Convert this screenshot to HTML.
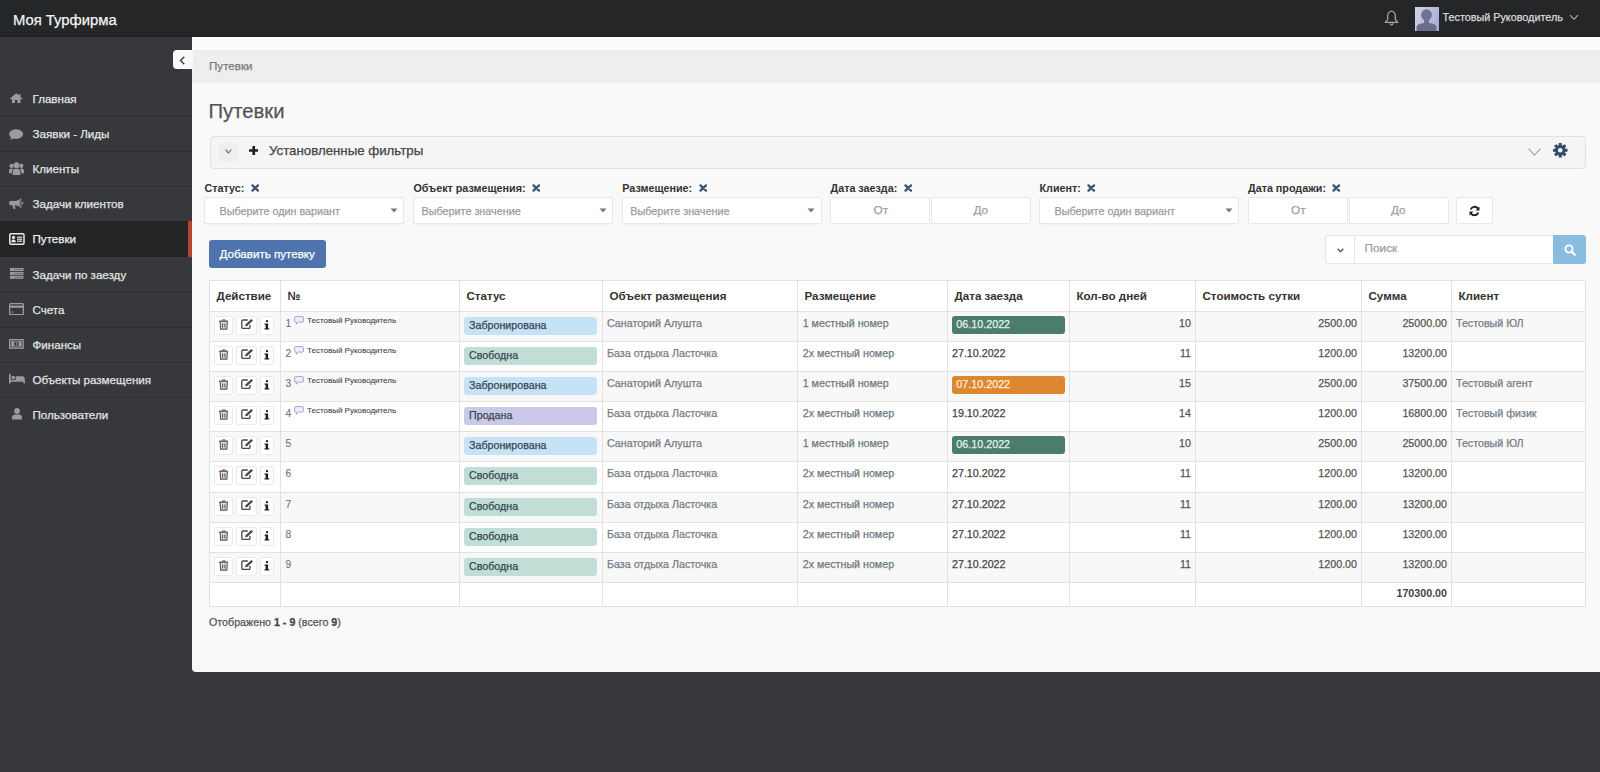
<!DOCTYPE html>
<html><head><meta charset="utf-8"><title>Путевки</title>
<style>
*{box-sizing:border-box;margin:0;padding:0}
html,body{width:1600px;height:772px;overflow:hidden}
body{background:#36383b;font-family:"Liberation Sans",sans-serif;position:relative;color:#333}
.a{position:absolute}
.t{position:absolute;white-space:nowrap;line-height:1;-webkit-text-stroke:0.25px currentColor}
.t[style*="bold"]{-webkit-text-stroke-width:0}
</style></head><body>

<div class="a" style="left:0;top:0;width:1600px;height:37px;background:#252628"></div>
<div class="a" style="left:0;top:35px;width:1600px;height:2px;background:#202123"></div>
<div class="t" style="left:12.9px;top:13.4px;font-size:14.85px;color:#f2f2f2">Моя Турфирма</div>
<svg class="a" style="left:1384px;top:10px" width="15" height="16" viewBox="0 0 15 16"><path d="M7.5 1C5.2 1.6 3.7 3.6 3.7 6.2V9.4L1.2 12.4H13.8L11.3 9.4V6.2C11.3 3.6 9.8 1.6 7.5 1Z" fill="none" stroke="#a9aaad" stroke-width="1.2" stroke-linejoin="round"/><path d="M6 13.3C6.2 14.3 6.8 14.8 7.5 14.8S8.8 14.3 9 13.3" fill="none" stroke="#a9aaad" stroke-width="1.2"/></svg>
<div class="a" style="left:1415px;top:7px;width:24px;height:24px;background:linear-gradient(120deg,#d3d5ec 0%,#b9bce0 55%,#a4a8d6 100%);overflow:hidden"><svg width="24" height="24" viewBox="0 0 24 24"><ellipse cx="11.5" cy="8" rx="5.4" ry="5.8" fill="#6f7390"/><path d="M9 12.5H14V16.5H9Z" fill="#6c7089"/><path d="M1.5 24V20.5C1.5 18.3 3.5 17 6 16.6L9.5 16H13.5L17 16.6C19.5 17 21.5 18.3 21.5 20.5V24Z" fill="#6a6e88"/></svg></div>
<div class="t" style="left:1442.5px;top:12px;font-size:10.8px;color:#d9d9d9">Тестовый Руководитель</div>
<svg class="a" style="left:1569.3px;top:14px" width="10" height="7" viewBox="0 0 10 7"><path d="M1 1.2L5 5.2 9 1.2" fill="none" stroke="#a9aaad" stroke-width="1.2"/></svg>
<div class="a" style="left:0;top:116px;width:192px;height:1px;background:#2d2f32"></div>
<div class="a" style="left:0;top:117px;width:192px;height:1px;background:#3a3c40"></div>
<svg class="a" style="left:10.4px;top:93.4px" width="12.4" height="10" viewBox="0 0 12.4 10"><path d="M6.2 0.3L0 5.6 0.9 6.6 1.9 5.8V10H5V7H7.4V10H10.5V5.8L11.5 6.6 12.4 5.6 10.4 3.9V1H8.8V2.5Z" fill="#9a9b9f"/></svg>
<div class="t" style="left:32.5px;top:93.3px;font-size:11.6px;color:#e3e3e3">Главная</div>
<div class="a" style="left:0;top:151px;width:192px;height:1px;background:#2d2f32"></div>
<div class="a" style="left:0;top:152px;width:192px;height:1px;background:#3a3c40"></div>
<svg class="a" style="left:9.3px;top:129.1px" width="14.3" height="11" viewBox="0 0 14.3 11"><path d="M7.15 0.3C3.3 0.3 0.2 2.5 0.2 5.1 0.2 6.5 1 7.7 2.3 8.6 2.1 9.5 1.6 10.2 0.9 10.8 2.5 10.7 3.8 10 4.7 9.6 5.5 9.8 6.3 9.9 7.15 9.9 11 9.9 14.1 7.7 14.1 5.1 14.1 2.5 11 0.3 7.15 0.3Z" fill="#9a9b9f"/></svg>
<div class="t" style="left:32.5px;top:128.3px;font-size:11.6px;color:#e3e3e3">Заявки - Лиды</div>
<div class="a" style="left:0;top:186px;width:192px;height:1px;background:#2d2f32"></div>
<div class="a" style="left:0;top:187px;width:192px;height:1px;background:#3a3c40"></div>
<svg class="a" style="left:9.3px;top:161.6px" width="15" height="13.5" viewBox="0 0 15 13.5"><circle cx="7.5" cy="3.2" r="2.9" fill="#9a9b9f"/><circle cx="2.6" cy="3.9" r="2.1" fill="#9a9b9f"/><circle cx="12.4" cy="3.9" r="2.1" fill="#9a9b9f"/><path d="M3.6 13.5V10.2C3.6 8 5.2 6.6 7.5 6.6S11.4 8 11.4 10.2V13.5Z" fill="#9a9b9f"/><path d="M0 11.3V8.7C0 7.3 1 6.5 2.6 6.5 3.3 6.5 3.8 6.7 4.2 7 3.2 7.8 2.8 8.9 2.8 10.2V11.3Z" fill="#9a9b9f"/><path d="M15 11.3V8.7C15 7.3 14 6.5 12.4 6.5 11.7 6.5 11.2 6.7 10.8 7 11.8 7.8 12.2 8.9 12.2 10.2V11.3Z" fill="#9a9b9f"/></svg>
<div class="t" style="left:32.5px;top:163.3px;font-size:11.6px;color:#e3e3e3">Клиенты</div>
<svg class="a" style="left:9.3px;top:197.8px" width="14.3" height="11" viewBox="0 0 14.3 11"><path d="M12.3 0.2V10.2C10.3 8.4 8 7.5 5.6 7.3L6.6 10.8 4.4 11 3.4 7.3H1.6C0.8 7.3 0.2 6.7 0.2 5.9V4.3C0.2 3.5 0.8 2.9 1.6 2.9H5.2C7.8 2.9 10.2 2 12.3 0.2Z" fill="#9a9b9f"/><path d="M11.2 2.2V8.2" stroke="#36383b" stroke-width="0.8"/><rect x="12.8" y="3.8" width="1.4" height="2.8" rx="0.6" fill="#9a9b9f"/></svg>
<div class="t" style="left:32.5px;top:198.3px;font-size:11.6px;color:#e3e3e3">Задачи клиентов</div>
<div class="a" style="left:0;top:221px;width:192px;height:36px;background:#232426"></div>
<div class="a" style="left:188px;top:221px;width:4px;height:36px;background:#b5432f"></div>
<svg class="a" style="left:8.8px;top:233px" width="15.8" height="12" viewBox="0 0 15.8 12"><rect x="0.8" y="0.8" width="14.2" height="10.4" rx="1.2" fill="none" stroke="#e8e8e8" stroke-width="1.5"/><circle cx="4.5" cy="4.4" r="1.6" fill="#e8e8e8"/><path d="M2.2 9.2C2.2 7.4 3.1 6.5 4.5 6.5S6.8 7.4 6.8 9.2Z" fill="#e8e8e8"/><rect x="8" y="3.6" width="5.2" height="1.2" fill="#e8e8e8"/><rect x="8" y="5.6" width="5.2" height="1.2" fill="#e8e8e8"/><rect x="8" y="7.6" width="5.2" height="1.2" fill="#e8e8e8"/></svg>
<div class="t" style="left:32.5px;top:233.3px;font-size:11.6px;color:#eeeeee">Путевки</div>
<div class="a" style="left:0;top:292px;width:192px;height:1px;background:#2d2f32"></div>
<div class="a" style="left:0;top:293px;width:192px;height:1px;background:#3a3c40"></div>
<svg class="a" style="left:10.1px;top:268px" width="13.5" height="10.8" viewBox="0 0 13.5 10.8"><rect x="0" y="0" width="13.5" height="3" fill="#9a9b9f"/><rect x="0" y="3.9" width="13.5" height="3" fill="#9a9b9f"/><rect x="0" y="7.8" width="13.5" height="3" fill="#9a9b9f"/><rect x="4" y="1.1" width="8.5" height="0.8" fill="#36383b" opacity=".55"/><rect x="4" y="5" width="8.5" height="0.8" fill="#36383b" opacity=".55"/><rect x="4" y="8.9" width="8.5" height="0.8" fill="#36383b" opacity=".55"/></svg>
<div class="t" style="left:32.5px;top:269.3px;font-size:11.6px;color:#e3e3e3">Задачи по заезду</div>
<div class="a" style="left:0;top:327px;width:192px;height:1px;background:#2d2f32"></div>
<div class="a" style="left:0;top:328px;width:192px;height:1px;background:#3a3c40"></div>
<svg class="a" style="left:9px;top:302.7px" width="15" height="12.3" viewBox="0 0 15 12.3"><rect x="0.65" y="0.65" width="13.7" height="11" rx="1" fill="none" stroke="#9a9b9f" stroke-width="1.3"/><rect x="0.65" y="2.6" width="13.7" height="2.2" fill="#9a9b9f"/><rect x="2.3" y="8.6" width="2.2" height="0.9" fill="#9a9b9f"/></svg>
<div class="t" style="left:32.5px;top:304.3px;font-size:11.6px;color:#e3e3e3">Счета</div>
<div class="a" style="left:0;top:362px;width:192px;height:1px;background:#2d2f32"></div>
<div class="a" style="left:0;top:363px;width:192px;height:1px;background:#3a3c40"></div>
<svg class="a" style="left:9.3px;top:339px" width="14.8" height="9.8" viewBox="0 0 14.8 9.8"><rect x="0.7" y="0.7" width="13.4" height="8.4" fill="none" stroke="#9a9b9f" stroke-width="1.4"/><rect x="2.2" y="2.2" width="10.4" height="5.4" fill="#9a9b9f"/><ellipse cx="7.4" cy="4.9" rx="2.3" ry="2.4" fill="#36383b"/><rect x="6.9" y="3.4" width="1" height="3" fill="#9a9b9f"/></svg>
<div class="t" style="left:32.5px;top:339.3px;font-size:11.6px;color:#e3e3e3">Финансы</div>
<div class="a" style="left:0;top:397px;width:192px;height:1px;background:#2d2f32"></div>
<div class="a" style="left:0;top:398px;width:192px;height:1px;background:#3a3c40"></div>
<svg class="a" style="left:8.9px;top:374.4px" width="16" height="9.4" viewBox="0 0 16 9.4"><rect x="0" y="0" width="1.7" height="9.4" fill="#9a9b9f"/><rect x="2.6" y="2" width="3.2" height="3.2" rx="1" fill="#9a9b9f"/><path d="M6.6 2.2H13.6C14.9 2.2 15.6 3 15.6 4.2V6H6.6Z" fill="#9a9b9f"/><rect x="0" y="6.1" width="16" height="1.7" fill="#9a9b9f"/><rect x="14.3" y="6.5" width="1.7" height="2.9" fill="#9a9b9f"/></svg>
<div class="t" style="left:32.5px;top:374.3px;font-size:11.6px;color:#e3e3e3">Объекты размещения</div>
<svg class="a" style="left:11.7px;top:408.3px" width="10.1" height="11.5" viewBox="0 0 10.1 11.5"><ellipse cx="5.05" cy="3" rx="2.9" ry="3" fill="#9a9b9f"/><path d="M0 11.5V9.7C0 7.8 1.6 6.6 3.3 6.6H6.8C8.5 6.6 10.1 7.8 10.1 9.7V11.5Z" fill="#9a9b9f"/></svg>
<div class="t" style="left:32.5px;top:409.3px;font-size:11.6px;color:#e3e3e3">Пользователи</div>
<div class="a" style="left:192px;top:37px;width:1408px;height:635px;background:#f9f9f9;border-bottom-left-radius:4px"></div>
<div class="a" style="left:192px;top:37px;width:1408px;height:13px;background:#fbfbfb"></div>
<div class="a" style="left:192px;top:50px;width:1408px;height:33px;background:#eeeeee"></div>
<div class="t" style="left:209px;top:60px;font-size:11.6px;color:#777b82">Путевки</div>
<div class="a" style="left:173px;top:50px;width:20px;height:19px;background:#f9f9f9;border-radius:4px 0 0 4px"></div>
<svg class="a" style="left:179px;top:55.5px" width="7" height="9" viewBox="0 0 7 9"><path d="M5.3 0.8L1.5 4.5 5.3 8.2" fill="none" stroke="#3c3c3c" stroke-width="1.4"/></svg>
<div class="t" style="left:208.5px;top:100.7px;font-size:20.3px;color:#555">Путевки</div>
<div class="a" style="left:209.7px;top:135.5px;width:1376px;height:33px;background:#f5f5f5;border:1px solid #e1e1e1;border-radius:4px"></div>
<div class="a" style="left:218.7px;top:141.8px;width:19.3px;height:20px;background:#efefef;border-radius:3px"></div>
<svg class="a" style="left:224.8px;top:148.7px" width="7" height="5" viewBox="0 0 7 5"><path d="M0.5 0.6L3.4 3.9 6.3 0.6" fill="none" stroke="#6a6a6a" stroke-width="1.05"/></svg>
<svg class="a" style="left:248.9px;top:146px" width="9.5" height="9" viewBox="0 0 9.5 9"><path d="M3.4 0H6.1V3.2H9.5V5.8H6.1V9H3.4V5.8H0V3.2H3.4Z" fill="#1f1f1f"/></svg>
<div class="t" style="left:269px;top:144px;font-size:13.27px;color:#444">Установленные фильтры</div>
<svg class="a" style="left:1527.5px;top:147.5px" width="13" height="8.5" viewBox="0 0 13 8.5"><path d="M0.6 0.6L6.5 7.2 12.4 0.6" fill="none" stroke="#a3a3a3" stroke-width="1.1"/></svg>
<svg class="a" style="left:1553px;top:143.3px" width="14.5" height="14.5" viewBox="0 0 14.5 14.5"><g fill="#34496b"><rect x="5.7" y="0" width="3.1" height="4" rx="0.6" transform="rotate(0 7.25 7.25)"/><rect x="5.7" y="0" width="3.1" height="4" rx="0.6" transform="rotate(45 7.25 7.25)"/><rect x="5.7" y="0" width="3.1" height="4" rx="0.6" transform="rotate(90 7.25 7.25)"/><rect x="5.7" y="0" width="3.1" height="4" rx="0.6" transform="rotate(135 7.25 7.25)"/><rect x="5.7" y="0" width="3.1" height="4" rx="0.6" transform="rotate(180 7.25 7.25)"/><rect x="5.7" y="0" width="3.1" height="4" rx="0.6" transform="rotate(225 7.25 7.25)"/><rect x="5.7" y="0" width="3.1" height="4" rx="0.6" transform="rotate(270 7.25 7.25)"/><rect x="5.7" y="0" width="3.1" height="4" rx="0.6" transform="rotate(315 7.25 7.25)"/><circle cx="7.25" cy="7.25" r="5.2"/></g><circle cx="7.25" cy="7.25" r="2.3" fill="#eef3f8"/></svg>
<div class="t" style="left:204.5px;top:183px;font-size:10.75px;font-weight:bold;color:#333">Статус:</div>
<svg class="a" style="left:250.6px;top:184px" width="8.5" height="8" viewBox="0 0 8.5 8"><path d="M1.5 1.4L7 6.6M7 1.4L1.5 6.6" stroke="#3b5470" stroke-width="2.3" stroke-linecap="round"/></svg>
<div class="a" style="left:204.2px;top:197px;width:200px;height:27px;background:#fff;border:1px solid #e8e8e8;border-radius:2px;box-shadow:0 1px 1px rgba(0,0,0,.03)"></div>
<div class="t" style="left:219.5px;top:205.5px;font-size:10.8px;color:#9c9c9c">Выберите один вариант</div>
<svg class="a" style="left:389.5px;top:208px" width="8" height="5" viewBox="0 0 8 5"><path d="M0.5 0.5H7.5L4 4.5Z" fill="#777"/></svg>
<div class="t" style="left:413.5px;top:183px;font-size:10.75px;font-weight:bold;color:#333">Объект размещения:</div>
<svg class="a" style="left:531.8px;top:184px" width="8.5" height="8" viewBox="0 0 8.5 8"><path d="M1.5 1.4L7 6.6M7 1.4L1.5 6.6" stroke="#3b5470" stroke-width="2.3" stroke-linecap="round"/></svg>
<div class="a" style="left:413.2px;top:197px;width:200px;height:27px;background:#fff;border:1px solid #e8e8e8;border-radius:2px;box-shadow:0 1px 1px rgba(0,0,0,.03)"></div>
<div class="t" style="left:421.5px;top:205.5px;font-size:10.8px;color:#9c9c9c">Выберите значение</div>
<svg class="a" style="left:598.5px;top:208px" width="8" height="5" viewBox="0 0 8 5"><path d="M0.5 0.5H7.5L4 4.5Z" fill="#777"/></svg>
<div class="t" style="left:622.3px;top:183px;font-size:10.75px;font-weight:bold;color:#333">Размещение:</div>
<svg class="a" style="left:698.5px;top:184px" width="8.5" height="8" viewBox="0 0 8.5 8"><path d="M1.5 1.4L7 6.6M7 1.4L1.5 6.6" stroke="#3b5470" stroke-width="2.3" stroke-linecap="round"/></svg>
<div class="a" style="left:622.0px;top:197px;width:200px;height:27px;background:#fff;border:1px solid #e8e8e8;border-radius:2px;box-shadow:0 1px 1px rgba(0,0,0,.03)"></div>
<div class="t" style="left:630.3px;top:205.5px;font-size:10.8px;color:#9c9c9c">Выберите значение</div>
<svg class="a" style="left:807.3px;top:208px" width="8" height="5" viewBox="0 0 8 5"><path d="M0.5 0.5H7.5L4 4.5Z" fill="#777"/></svg>
<div class="t" style="left:830.5px;top:183px;font-size:10.75px;font-weight:bold;color:#333">Дата заезда:</div>
<svg class="a" style="left:903.5px;top:184px" width="8.5" height="8" viewBox="0 0 8.5 8"><path d="M1.5 1.4L7 6.6M7 1.4L1.5 6.6" stroke="#3b5470" stroke-width="2.3" stroke-linecap="round"/></svg>
<div class="a" style="left:830.2px;top:197px;width:100px;height:27px;background:#fff;border:1px solid #e8e8e8;border-radius:2px 0 0 2px"></div>
<div class="a" style="left:931.2px;top:197px;width:100px;height:27px;background:#fff;border:1px solid #e8e8e8;border-radius:0 2px 2px 0"></div>
<div class="t" style="left:873.5px;top:205px;font-size:11.8px;color:#a0a0a0">От</div>
<div class="t" style="left:973.5px;top:205px;font-size:11.8px;color:#a0a0a0">До</div>
<div class="t" style="left:1039.5px;top:183px;font-size:10.75px;font-weight:bold;color:#333">Клиент:</div>
<svg class="a" style="left:1087.1px;top:184px" width="8.5" height="8" viewBox="0 0 8.5 8"><path d="M1.5 1.4L7 6.6M7 1.4L1.5 6.6" stroke="#3b5470" stroke-width="2.3" stroke-linecap="round"/></svg>
<div class="a" style="left:1039.2px;top:197px;width:200px;height:27px;background:#fff;border:1px solid #e8e8e8;border-radius:2px;box-shadow:0 1px 1px rgba(0,0,0,.03)"></div>
<div class="t" style="left:1054.5px;top:205.5px;font-size:10.8px;color:#9c9c9c">Выберите один вариант</div>
<svg class="a" style="left:1224.5px;top:208px" width="8" height="5" viewBox="0 0 8 5"><path d="M0.5 0.5H7.5L4 4.5Z" fill="#777"/></svg>
<div class="t" style="left:1248px;top:183px;font-size:10.75px;font-weight:bold;color:#333">Дата продажи:</div>
<svg class="a" style="left:1332.3px;top:184px" width="8.5" height="8" viewBox="0 0 8.5 8"><path d="M1.5 1.4L7 6.6M7 1.4L1.5 6.6" stroke="#3b5470" stroke-width="2.3" stroke-linecap="round"/></svg>
<div class="a" style="left:1247.7px;top:197px;width:100px;height:27px;background:#fff;border:1px solid #e8e8e8;border-radius:2px 0 0 2px"></div>
<div class="a" style="left:1348.7px;top:197px;width:100px;height:27px;background:#fff;border:1px solid #e8e8e8;border-radius:0 2px 2px 0"></div>
<div class="t" style="left:1291px;top:205px;font-size:11.8px;color:#a0a0a0">От</div>
<div class="t" style="left:1391px;top:205px;font-size:11.8px;color:#a0a0a0">До</div>
<div class="a" style="left:1456px;top:197px;width:37px;height:27px;background:#fff;border:1px solid #e8e8e8;border-radius:2px"></div>
<svg class="a" style="left:1469px;top:205px" width="11" height="12" viewBox="0 0 11 12"><path d="M9.3 4.2A4 4 0 0 0 1.8 4.6M1.7 7.8A4 4 0 0 0 9.2 7.4" fill="none" stroke="#222" stroke-width="1.8"/><path d="M10.5 1.5V5.5H6.5Z M0.5 10.5V6.5H4.5Z" fill="#222"/></svg>
<div class="a" style="left:209px;top:239.5px;width:117px;height:28px;background:#4f73ad;border-radius:3px"></div>
<div class="t" style="left:219.5px;top:248px;font-size:11.6px;color:#fff">Добавить путевку</div>
<div class="a" style="left:1325px;top:235px;width:30px;height:29px;background:#fff;border:1px solid #e6e6e6;border-radius:3px 0 0 3px"></div>
<div class="a" style="left:1354px;top:235px;width:1px;height:29px;background:#e6e6e6"></div>
<svg class="a" style="left:1336.5px;top:247.5px" width="7" height="5" viewBox="0 0 7 5"><path d="M0.7 0.8L3.5 3.7 6.3 0.8" fill="none" stroke="#555" stroke-width="1.3"/></svg>
<div class="a" style="left:1355px;top:235px;width:199px;height:29px;background:#fff;border:1px solid #e6e6e6;border-left:none"></div>
<div class="t" style="left:1364.5px;top:243.3px;font-size:11.8px;color:#9d9d9d">Поиск</div>
<div class="a" style="left:1553px;top:235px;width:32.5px;height:29px;background:#88bde0;border-radius:0 3px 3px 0"></div>
<svg class="a" style="left:1563.5px;top:243.5px" width="12" height="12" viewBox="0 0 12 12"><circle cx="5" cy="5" r="3.6" fill="none" stroke="#fff" stroke-width="1.8"/><path d="M7.6 7.6L10.8 10.8" stroke="#fff" stroke-width="2.2" stroke-linecap="round"/></svg>
<div class="a" style="left:209px;top:280px;width:1376px;height:327px;background:#fff"></div>
<div class="a" style="left:209px;top:311px;width:1376px;height:30px;background:#f8f8f8"></div>
<div class="a" style="left:209px;top:371px;width:1376px;height:30px;background:#f8f8f8"></div>
<div class="a" style="left:209px;top:431px;width:1376px;height:30px;background:#f8f8f8"></div>
<div class="a" style="left:209px;top:492px;width:1376px;height:30px;background:#f8f8f8"></div>
<div class="a" style="left:209px;top:552px;width:1376px;height:30px;background:#f8f8f8"></div>
<div class="a" style="left:209px;top:280px;width:1377px;height:1px;background:#e2e2e2"></div>
<div class="a" style="left:209px;top:311px;width:1377px;height:1px;background:#e2e2e2"></div>
<div class="a" style="left:209px;top:341px;width:1377px;height:1px;background:#e2e2e2"></div>
<div class="a" style="left:209px;top:371px;width:1377px;height:1px;background:#e2e2e2"></div>
<div class="a" style="left:209px;top:401px;width:1377px;height:1px;background:#e2e2e2"></div>
<div class="a" style="left:209px;top:431px;width:1377px;height:1px;background:#e2e2e2"></div>
<div class="a" style="left:209px;top:461px;width:1377px;height:1px;background:#e2e2e2"></div>
<div class="a" style="left:209px;top:492px;width:1377px;height:1px;background:#e2e2e2"></div>
<div class="a" style="left:209px;top:522px;width:1377px;height:1px;background:#e2e2e2"></div>
<div class="a" style="left:209px;top:552px;width:1377px;height:1px;background:#e2e2e2"></div>
<div class="a" style="left:209px;top:582px;width:1377px;height:1px;background:#e2e2e2"></div>
<div class="a" style="left:209px;top:606px;width:1377px;height:1px;background:#e2e2e2"></div>
<div class="a" style="left:209px;top:280px;width:1px;height:327px;background:#e2e2e2"></div>
<div class="a" style="left:280px;top:280px;width:1px;height:327px;background:#e2e2e2"></div>
<div class="a" style="left:459px;top:280px;width:1px;height:327px;background:#e2e2e2"></div>
<div class="a" style="left:602px;top:280px;width:1px;height:327px;background:#e2e2e2"></div>
<div class="a" style="left:797px;top:280px;width:1px;height:327px;background:#e2e2e2"></div>
<div class="a" style="left:947px;top:280px;width:1px;height:327px;background:#e2e2e2"></div>
<div class="a" style="left:1069px;top:280px;width:1px;height:327px;background:#e2e2e2"></div>
<div class="a" style="left:1195px;top:280px;width:1px;height:327px;background:#e2e2e2"></div>
<div class="a" style="left:1361px;top:280px;width:1px;height:327px;background:#e2e2e2"></div>
<div class="a" style="left:1451px;top:280px;width:1px;height:327px;background:#e2e2e2"></div>
<div class="a" style="left:1585px;top:280px;width:1px;height:327px;background:#e2e2e2"></div>
<div class="t" style="left:216.5px;top:290.2px;font-size:11.6px;font-weight:bold;color:#333">Действие</div>
<div class="t" style="left:287.5px;top:290.2px;font-size:11.6px;font-weight:bold;color:#333">№</div>
<div class="t" style="left:466.5px;top:290.2px;font-size:11.6px;font-weight:bold;color:#333">Статус</div>
<div class="t" style="left:609.5px;top:290.2px;font-size:11.6px;font-weight:bold;color:#333">Объект размещения</div>
<div class="t" style="left:804.5px;top:290.2px;font-size:11.6px;font-weight:bold;color:#333">Размещение</div>
<div class="t" style="left:954.5px;top:290.2px;font-size:11.6px;font-weight:bold;color:#333">Дата заезда</div>
<div class="t" style="left:1076.5px;top:290.2px;font-size:11.6px;font-weight:bold;color:#333">Кол-во дней</div>
<div class="t" style="left:1202.5px;top:290.2px;font-size:11.6px;font-weight:bold;color:#333">Стоимость сутки</div>
<div class="t" style="left:1368.5px;top:290.2px;font-size:11.6px;font-weight:bold;color:#333">Сумма</div>
<div class="t" style="left:1458.5px;top:290.2px;font-size:11.6px;font-weight:bold;color:#333">Клиент</div>
<div class="a" style="left:214.3px;top:316px;width:18.5px;height:18.6px;border:1px solid #ebebeb;border-radius:2px;background:#fff"></div>
<div class="a" style="left:218.6px;top:319.3px;line-height:0"><svg width="9.5" height="11" viewBox="0 0 9.5 11"><path d="M3.3 1.9V0.9H6.2V1.9" fill="none" stroke="#5f5360" stroke-width="1"/><rect x="0" y="1.6" width="9.5" height="1.3" fill="#5f5360"/><path d="M1.2 2.9L1.6 10.1H7.9L8.3 2.9" fill="#ead9ea" stroke="#5f5360" stroke-width="1.1"/><path d="M3.6 4.4V8.6M5.9 4.4V8.6" stroke="#5f5360" stroke-width="1.1"/></svg></div>
<div class="a" style="left:236.3px;top:316px;width:20.7px;height:18.6px;border:1px solid #ebebeb;border-radius:2px;background:#fff"></div>
<div class="a" style="left:240.6px;top:319.4px;line-height:0"><svg width="12.5" height="10" viewBox="0 0 12.5 10"><path d="M6.8 1H2C1.3 1 0.8 1.5 0.8 2.2V8.3C0.8 9 1.3 9.4 2 9.4H7.9C8.6 9.4 9 9 9 8.3V6" fill="none" stroke="#484848" stroke-width="1.3"/><path d="M4.1 7.2L4.6 5.3 10.3 0 12 1.6 6.2 7Z" fill="#484848"/></svg></div>
<div class="a" style="left:260.3px;top:316px;width:14px;height:18.6px;border:1px solid #ebebeb;border-radius:2px;background:#fff"></div>
<div class="a" style="left:264.3px;top:319.5px;line-height:0"><svg width="6" height="10" viewBox="0 0 6 10"><circle cx="3" cy="1.2" r="1.15" fill="#1e1e1e"/><path d="M0.6 3.4H4.1V8.2H5.2V9.6H0.5V8.2H1.6V4.8H0.6Z" fill="#1e1e1e"/></svg></div>
<div class="t" style="left:285.5px;top:319px;font-size:10.3px;color:#707070;-webkit-text-stroke-width:0.1px">1</div>
<div class="a" style="left:294px;top:315.5px;line-height:0"><svg width="10" height="9" viewBox="0 0 10 9"><path d="M1.5 0.6H8.5C9 0.6 9.4 1 9.4 1.5V5.2C9.4 5.7 9 6.1 8.5 6.1H4.5L2.3 8.2V6.1H1.5C1 6.1 0.6 5.7 0.6 5.2V1.5C0.6 1 1 0.6 1.5 0.6Z" fill="#eef0f8" stroke="#8b93c0" stroke-width="0.8"/></svg></div>
<div class="t" style="left:307px;top:316.5px;font-size:8px;color:#3a3a3a;-webkit-text-stroke-width:0.05px">Тестовый Руководитель</div>
<div class="a" style="left:464px;top:316.6px;width:133px;height:18px;background:#c6e2f7;border-radius:3px"></div>
<div class="t" style="left:469px;top:319.8px;font-size:10.7px;color:#3a4650">Забронирована</div>
<div class="t" style="left:607px;top:317.5px;font-size:10.7px;color:#767d86">Санаторий Алушта</div>
<div class="t" style="left:802.7px;top:317.5px;font-size:10.7px;color:#6f7882">1 местный номер</div>
<div class="a" style="left:952px;top:316.2px;width:113px;height:18px;background:#4b7c6c;border-radius:3px"></div>
<div class="t" style="left:956.3px;top:319.3px;font-size:10.75px;color:#e6f5ee">06.10.2022</div>
<div class="t" style="left:1069px;top:317.5px;width:122px;text-align:right;font-size:10.7px;color:#555">10</div>
<div class="t" style="left:1195px;top:317.5px;width:162px;text-align:right;font-size:10.7px;color:#555">2500.00</div>
<div class="t" style="left:1361px;top:317.5px;width:86px;text-align:right;font-size:10.7px;color:#555">25000.00</div>
<div class="t" style="left:1456px;top:317.5px;font-size:10.7px;color:#767d86">Тестовый ЮЛ</div>
<div class="a" style="left:214.3px;top:346px;width:18.5px;height:18.6px;border:1px solid #ebebeb;border-radius:2px;background:#fff"></div>
<div class="a" style="left:218.6px;top:349.3px;line-height:0"><svg width="9.5" height="11" viewBox="0 0 9.5 11"><path d="M3.3 1.9V0.9H6.2V1.9" fill="none" stroke="#5f5360" stroke-width="1"/><rect x="0" y="1.6" width="9.5" height="1.3" fill="#5f5360"/><path d="M1.2 2.9L1.6 10.1H7.9L8.3 2.9" fill="#ead9ea" stroke="#5f5360" stroke-width="1.1"/><path d="M3.6 4.4V8.6M5.9 4.4V8.6" stroke="#5f5360" stroke-width="1.1"/></svg></div>
<div class="a" style="left:236.3px;top:346px;width:20.7px;height:18.6px;border:1px solid #ebebeb;border-radius:2px;background:#fff"></div>
<div class="a" style="left:240.6px;top:349.4px;line-height:0"><svg width="12.5" height="10" viewBox="0 0 12.5 10"><path d="M6.8 1H2C1.3 1 0.8 1.5 0.8 2.2V8.3C0.8 9 1.3 9.4 2 9.4H7.9C8.6 9.4 9 9 9 8.3V6" fill="none" stroke="#484848" stroke-width="1.3"/><path d="M4.1 7.2L4.6 5.3 10.3 0 12 1.6 6.2 7Z" fill="#484848"/></svg></div>
<div class="a" style="left:260.3px;top:346px;width:14px;height:18.6px;border:1px solid #ebebeb;border-radius:2px;background:#fff"></div>
<div class="a" style="left:264.3px;top:349.5px;line-height:0"><svg width="6" height="10" viewBox="0 0 6 10"><circle cx="3" cy="1.2" r="1.15" fill="#1e1e1e"/><path d="M0.6 3.4H4.1V8.2H5.2V9.6H0.5V8.2H1.6V4.8H0.6Z" fill="#1e1e1e"/></svg></div>
<div class="t" style="left:285.5px;top:349px;font-size:10.3px;color:#707070;-webkit-text-stroke-width:0.1px">2</div>
<div class="a" style="left:294px;top:345.5px;line-height:0"><svg width="10" height="9" viewBox="0 0 10 9"><path d="M1.5 0.6H8.5C9 0.6 9.4 1 9.4 1.5V5.2C9.4 5.7 9 6.1 8.5 6.1H4.5L2.3 8.2V6.1H1.5C1 6.1 0.6 5.7 0.6 5.2V1.5C0.6 1 1 0.6 1.5 0.6Z" fill="#eef0f8" stroke="#8b93c0" stroke-width="0.8"/></svg></div>
<div class="t" style="left:307px;top:346.5px;font-size:8px;color:#3a3a3a;-webkit-text-stroke-width:0.05px">Тестовый Руководитель</div>
<div class="a" style="left:464px;top:346.6px;width:133px;height:18px;background:#c0ddd6;border-radius:3px"></div>
<div class="t" style="left:469px;top:349.8px;font-size:10.7px;color:#3a4650">Свободна</div>
<div class="t" style="left:607px;top:347.5px;font-size:10.7px;color:#767d86">База отдыха Ласточка</div>
<div class="t" style="left:802.7px;top:347.5px;font-size:10.7px;color:#6f7882">2х местный номер</div>
<div class="t" style="left:952px;top:347.5px;font-size:10.7px;color:#444">27.10.2022</div>
<div class="t" style="left:1069px;top:347.5px;width:122px;text-align:right;font-size:10.7px;color:#555">11</div>
<div class="t" style="left:1195px;top:347.5px;width:162px;text-align:right;font-size:10.7px;color:#555">1200.00</div>
<div class="t" style="left:1361px;top:347.5px;width:86px;text-align:right;font-size:10.7px;color:#555">13200.00</div>
<div class="a" style="left:214.3px;top:376px;width:18.5px;height:18.6px;border:1px solid #ebebeb;border-radius:2px;background:#fff"></div>
<div class="a" style="left:218.6px;top:379.3px;line-height:0"><svg width="9.5" height="11" viewBox="0 0 9.5 11"><path d="M3.3 1.9V0.9H6.2V1.9" fill="none" stroke="#5f5360" stroke-width="1"/><rect x="0" y="1.6" width="9.5" height="1.3" fill="#5f5360"/><path d="M1.2 2.9L1.6 10.1H7.9L8.3 2.9" fill="#ead9ea" stroke="#5f5360" stroke-width="1.1"/><path d="M3.6 4.4V8.6M5.9 4.4V8.6" stroke="#5f5360" stroke-width="1.1"/></svg></div>
<div class="a" style="left:236.3px;top:376px;width:20.7px;height:18.6px;border:1px solid #ebebeb;border-radius:2px;background:#fff"></div>
<div class="a" style="left:240.6px;top:379.4px;line-height:0"><svg width="12.5" height="10" viewBox="0 0 12.5 10"><path d="M6.8 1H2C1.3 1 0.8 1.5 0.8 2.2V8.3C0.8 9 1.3 9.4 2 9.4H7.9C8.6 9.4 9 9 9 8.3V6" fill="none" stroke="#484848" stroke-width="1.3"/><path d="M4.1 7.2L4.6 5.3 10.3 0 12 1.6 6.2 7Z" fill="#484848"/></svg></div>
<div class="a" style="left:260.3px;top:376px;width:14px;height:18.6px;border:1px solid #ebebeb;border-radius:2px;background:#fff"></div>
<div class="a" style="left:264.3px;top:379.5px;line-height:0"><svg width="6" height="10" viewBox="0 0 6 10"><circle cx="3" cy="1.2" r="1.15" fill="#1e1e1e"/><path d="M0.6 3.4H4.1V8.2H5.2V9.6H0.5V8.2H1.6V4.8H0.6Z" fill="#1e1e1e"/></svg></div>
<div class="t" style="left:285.5px;top:379px;font-size:10.3px;color:#707070;-webkit-text-stroke-width:0.1px">3</div>
<div class="a" style="left:294px;top:375.5px;line-height:0"><svg width="10" height="9" viewBox="0 0 10 9"><path d="M1.5 0.6H8.5C9 0.6 9.4 1 9.4 1.5V5.2C9.4 5.7 9 6.1 8.5 6.1H4.5L2.3 8.2V6.1H1.5C1 6.1 0.6 5.7 0.6 5.2V1.5C0.6 1 1 0.6 1.5 0.6Z" fill="#eef0f8" stroke="#8b93c0" stroke-width="0.8"/></svg></div>
<div class="t" style="left:307px;top:376.5px;font-size:8px;color:#3a3a3a;-webkit-text-stroke-width:0.05px">Тестовый Руководитель</div>
<div class="a" style="left:464px;top:376.6px;width:133px;height:18px;background:#c6e2f7;border-radius:3px"></div>
<div class="t" style="left:469px;top:379.8px;font-size:10.7px;color:#3a4650">Забронирована</div>
<div class="t" style="left:607px;top:377.5px;font-size:10.7px;color:#767d86">Санаторий Алушта</div>
<div class="t" style="left:802.7px;top:377.5px;font-size:10.7px;color:#6f7882">1 местный номер</div>
<div class="a" style="left:952px;top:376.2px;width:113px;height:18px;background:#dd8731;border-radius:3px"></div>
<div class="t" style="left:956.3px;top:379.3px;font-size:10.75px;color:#fff0d8">07.10.2022</div>
<div class="t" style="left:1069px;top:377.5px;width:122px;text-align:right;font-size:10.7px;color:#555">15</div>
<div class="t" style="left:1195px;top:377.5px;width:162px;text-align:right;font-size:10.7px;color:#555">2500.00</div>
<div class="t" style="left:1361px;top:377.5px;width:86px;text-align:right;font-size:10.7px;color:#555">37500.00</div>
<div class="t" style="left:1456px;top:377.5px;font-size:10.7px;color:#767d86">Тестовый агент</div>
<div class="a" style="left:214.3px;top:406px;width:18.5px;height:18.6px;border:1px solid #ebebeb;border-radius:2px;background:#fff"></div>
<div class="a" style="left:218.6px;top:409.3px;line-height:0"><svg width="9.5" height="11" viewBox="0 0 9.5 11"><path d="M3.3 1.9V0.9H6.2V1.9" fill="none" stroke="#5f5360" stroke-width="1"/><rect x="0" y="1.6" width="9.5" height="1.3" fill="#5f5360"/><path d="M1.2 2.9L1.6 10.1H7.9L8.3 2.9" fill="#ead9ea" stroke="#5f5360" stroke-width="1.1"/><path d="M3.6 4.4V8.6M5.9 4.4V8.6" stroke="#5f5360" stroke-width="1.1"/></svg></div>
<div class="a" style="left:236.3px;top:406px;width:20.7px;height:18.6px;border:1px solid #ebebeb;border-radius:2px;background:#fff"></div>
<div class="a" style="left:240.6px;top:409.4px;line-height:0"><svg width="12.5" height="10" viewBox="0 0 12.5 10"><path d="M6.8 1H2C1.3 1 0.8 1.5 0.8 2.2V8.3C0.8 9 1.3 9.4 2 9.4H7.9C8.6 9.4 9 9 9 8.3V6" fill="none" stroke="#484848" stroke-width="1.3"/><path d="M4.1 7.2L4.6 5.3 10.3 0 12 1.6 6.2 7Z" fill="#484848"/></svg></div>
<div class="a" style="left:260.3px;top:406px;width:14px;height:18.6px;border:1px solid #ebebeb;border-radius:2px;background:#fff"></div>
<div class="a" style="left:264.3px;top:409.5px;line-height:0"><svg width="6" height="10" viewBox="0 0 6 10"><circle cx="3" cy="1.2" r="1.15" fill="#1e1e1e"/><path d="M0.6 3.4H4.1V8.2H5.2V9.6H0.5V8.2H1.6V4.8H0.6Z" fill="#1e1e1e"/></svg></div>
<div class="t" style="left:285.5px;top:409px;font-size:10.3px;color:#707070;-webkit-text-stroke-width:0.1px">4</div>
<div class="a" style="left:294px;top:405.5px;line-height:0"><svg width="10" height="9" viewBox="0 0 10 9"><path d="M1.5 0.6H8.5C9 0.6 9.4 1 9.4 1.5V5.2C9.4 5.7 9 6.1 8.5 6.1H4.5L2.3 8.2V6.1H1.5C1 6.1 0.6 5.7 0.6 5.2V1.5C0.6 1 1 0.6 1.5 0.6Z" fill="#eef0f8" stroke="#8b93c0" stroke-width="0.8"/></svg></div>
<div class="t" style="left:307px;top:406.5px;font-size:8px;color:#3a3a3a;-webkit-text-stroke-width:0.05px">Тестовый Руководитель</div>
<div class="a" style="left:464px;top:406.6px;width:133px;height:18px;background:#cbc9ea;border-radius:3px"></div>
<div class="t" style="left:469px;top:409.8px;font-size:10.7px;color:#3a4650">Продана</div>
<div class="t" style="left:607px;top:407.5px;font-size:10.7px;color:#767d86">База отдыха Ласточка</div>
<div class="t" style="left:802.7px;top:407.5px;font-size:10.7px;color:#6f7882">2х местный номер</div>
<div class="t" style="left:952px;top:407.5px;font-size:10.7px;color:#444">19.10.2022</div>
<div class="t" style="left:1069px;top:407.5px;width:122px;text-align:right;font-size:10.7px;color:#555">14</div>
<div class="t" style="left:1195px;top:407.5px;width:162px;text-align:right;font-size:10.7px;color:#555">1200.00</div>
<div class="t" style="left:1361px;top:407.5px;width:86px;text-align:right;font-size:10.7px;color:#555">16800.00</div>
<div class="t" style="left:1456px;top:407.5px;font-size:10.7px;color:#767d86">Тестовый физик</div>
<div class="a" style="left:214.3px;top:436px;width:18.5px;height:18.6px;border:1px solid #ebebeb;border-radius:2px;background:#fff"></div>
<div class="a" style="left:218.6px;top:439.3px;line-height:0"><svg width="9.5" height="11" viewBox="0 0 9.5 11"><path d="M3.3 1.9V0.9H6.2V1.9" fill="none" stroke="#5f5360" stroke-width="1"/><rect x="0" y="1.6" width="9.5" height="1.3" fill="#5f5360"/><path d="M1.2 2.9L1.6 10.1H7.9L8.3 2.9" fill="#ead9ea" stroke="#5f5360" stroke-width="1.1"/><path d="M3.6 4.4V8.6M5.9 4.4V8.6" stroke="#5f5360" stroke-width="1.1"/></svg></div>
<div class="a" style="left:236.3px;top:436px;width:20.7px;height:18.6px;border:1px solid #ebebeb;border-radius:2px;background:#fff"></div>
<div class="a" style="left:240.6px;top:439.4px;line-height:0"><svg width="12.5" height="10" viewBox="0 0 12.5 10"><path d="M6.8 1H2C1.3 1 0.8 1.5 0.8 2.2V8.3C0.8 9 1.3 9.4 2 9.4H7.9C8.6 9.4 9 9 9 8.3V6" fill="none" stroke="#484848" stroke-width="1.3"/><path d="M4.1 7.2L4.6 5.3 10.3 0 12 1.6 6.2 7Z" fill="#484848"/></svg></div>
<div class="a" style="left:260.3px;top:436px;width:14px;height:18.6px;border:1px solid #ebebeb;border-radius:2px;background:#fff"></div>
<div class="a" style="left:264.3px;top:439.5px;line-height:0"><svg width="6" height="10" viewBox="0 0 6 10"><circle cx="3" cy="1.2" r="1.15" fill="#1e1e1e"/><path d="M0.6 3.4H4.1V8.2H5.2V9.6H0.5V8.2H1.6V4.8H0.6Z" fill="#1e1e1e"/></svg></div>
<div class="t" style="left:285.5px;top:439px;font-size:10.3px;color:#707070;-webkit-text-stroke-width:0.1px">5</div>
<div class="a" style="left:464px;top:436.6px;width:133px;height:18px;background:#c6e2f7;border-radius:3px"></div>
<div class="t" style="left:469px;top:439.8px;font-size:10.7px;color:#3a4650">Забронирована</div>
<div class="t" style="left:607px;top:437.5px;font-size:10.7px;color:#767d86">Санаторий Алушта</div>
<div class="t" style="left:802.7px;top:437.5px;font-size:10.7px;color:#6f7882">1 местный номер</div>
<div class="a" style="left:952px;top:436.2px;width:113px;height:18px;background:#4b7c6c;border-radius:3px"></div>
<div class="t" style="left:956.3px;top:439.3px;font-size:10.75px;color:#e6f5ee">06.10.2022</div>
<div class="t" style="left:1069px;top:437.5px;width:122px;text-align:right;font-size:10.7px;color:#555">10</div>
<div class="t" style="left:1195px;top:437.5px;width:162px;text-align:right;font-size:10.7px;color:#555">2500.00</div>
<div class="t" style="left:1361px;top:437.5px;width:86px;text-align:right;font-size:10.7px;color:#555">25000.00</div>
<div class="t" style="left:1456px;top:437.5px;font-size:10.7px;color:#767d86">Тестовый ЮЛ</div>
<div class="a" style="left:214.3px;top:466px;width:18.5px;height:18.6px;border:1px solid #ebebeb;border-radius:2px;background:#fff"></div>
<div class="a" style="left:218.6px;top:469.3px;line-height:0"><svg width="9.5" height="11" viewBox="0 0 9.5 11"><path d="M3.3 1.9V0.9H6.2V1.9" fill="none" stroke="#5f5360" stroke-width="1"/><rect x="0" y="1.6" width="9.5" height="1.3" fill="#5f5360"/><path d="M1.2 2.9L1.6 10.1H7.9L8.3 2.9" fill="#ead9ea" stroke="#5f5360" stroke-width="1.1"/><path d="M3.6 4.4V8.6M5.9 4.4V8.6" stroke="#5f5360" stroke-width="1.1"/></svg></div>
<div class="a" style="left:236.3px;top:466px;width:20.7px;height:18.6px;border:1px solid #ebebeb;border-radius:2px;background:#fff"></div>
<div class="a" style="left:240.6px;top:469.4px;line-height:0"><svg width="12.5" height="10" viewBox="0 0 12.5 10"><path d="M6.8 1H2C1.3 1 0.8 1.5 0.8 2.2V8.3C0.8 9 1.3 9.4 2 9.4H7.9C8.6 9.4 9 9 9 8.3V6" fill="none" stroke="#484848" stroke-width="1.3"/><path d="M4.1 7.2L4.6 5.3 10.3 0 12 1.6 6.2 7Z" fill="#484848"/></svg></div>
<div class="a" style="left:260.3px;top:466px;width:14px;height:18.6px;border:1px solid #ebebeb;border-radius:2px;background:#fff"></div>
<div class="a" style="left:264.3px;top:469.5px;line-height:0"><svg width="6" height="10" viewBox="0 0 6 10"><circle cx="3" cy="1.2" r="1.15" fill="#1e1e1e"/><path d="M0.6 3.4H4.1V8.2H5.2V9.6H0.5V8.2H1.6V4.8H0.6Z" fill="#1e1e1e"/></svg></div>
<div class="t" style="left:285.5px;top:469px;font-size:10.3px;color:#707070;-webkit-text-stroke-width:0.1px">6</div>
<div class="a" style="left:464px;top:466.6px;width:133px;height:18px;background:#c0ddd6;border-radius:3px"></div>
<div class="t" style="left:469px;top:469.8px;font-size:10.7px;color:#3a4650">Свободна</div>
<div class="t" style="left:607px;top:467.5px;font-size:10.7px;color:#767d86">База отдыха Ласточка</div>
<div class="t" style="left:802.7px;top:467.5px;font-size:10.7px;color:#6f7882">2х местный номер</div>
<div class="t" style="left:952px;top:467.5px;font-size:10.7px;color:#444">27.10.2022</div>
<div class="t" style="left:1069px;top:467.5px;width:122px;text-align:right;font-size:10.7px;color:#555">11</div>
<div class="t" style="left:1195px;top:467.5px;width:162px;text-align:right;font-size:10.7px;color:#555">1200.00</div>
<div class="t" style="left:1361px;top:467.5px;width:86px;text-align:right;font-size:10.7px;color:#555">13200.00</div>
<div class="a" style="left:214.3px;top:497px;width:18.5px;height:18.6px;border:1px solid #ebebeb;border-radius:2px;background:#fff"></div>
<div class="a" style="left:218.6px;top:500.3px;line-height:0"><svg width="9.5" height="11" viewBox="0 0 9.5 11"><path d="M3.3 1.9V0.9H6.2V1.9" fill="none" stroke="#5f5360" stroke-width="1"/><rect x="0" y="1.6" width="9.5" height="1.3" fill="#5f5360"/><path d="M1.2 2.9L1.6 10.1H7.9L8.3 2.9" fill="#ead9ea" stroke="#5f5360" stroke-width="1.1"/><path d="M3.6 4.4V8.6M5.9 4.4V8.6" stroke="#5f5360" stroke-width="1.1"/></svg></div>
<div class="a" style="left:236.3px;top:497px;width:20.7px;height:18.6px;border:1px solid #ebebeb;border-radius:2px;background:#fff"></div>
<div class="a" style="left:240.6px;top:500.4px;line-height:0"><svg width="12.5" height="10" viewBox="0 0 12.5 10"><path d="M6.8 1H2C1.3 1 0.8 1.5 0.8 2.2V8.3C0.8 9 1.3 9.4 2 9.4H7.9C8.6 9.4 9 9 9 8.3V6" fill="none" stroke="#484848" stroke-width="1.3"/><path d="M4.1 7.2L4.6 5.3 10.3 0 12 1.6 6.2 7Z" fill="#484848"/></svg></div>
<div class="a" style="left:260.3px;top:497px;width:14px;height:18.6px;border:1px solid #ebebeb;border-radius:2px;background:#fff"></div>
<div class="a" style="left:264.3px;top:500.5px;line-height:0"><svg width="6" height="10" viewBox="0 0 6 10"><circle cx="3" cy="1.2" r="1.15" fill="#1e1e1e"/><path d="M0.6 3.4H4.1V8.2H5.2V9.6H0.5V8.2H1.6V4.8H0.6Z" fill="#1e1e1e"/></svg></div>
<div class="t" style="left:285.5px;top:500px;font-size:10.3px;color:#707070;-webkit-text-stroke-width:0.1px">7</div>
<div class="a" style="left:464px;top:497.6px;width:133px;height:18px;background:#c0ddd6;border-radius:3px"></div>
<div class="t" style="left:469px;top:500.8px;font-size:10.7px;color:#3a4650">Свободна</div>
<div class="t" style="left:607px;top:498.5px;font-size:10.7px;color:#767d86">База отдыха Ласточка</div>
<div class="t" style="left:802.7px;top:498.5px;font-size:10.7px;color:#6f7882">2х местный номер</div>
<div class="t" style="left:952px;top:498.5px;font-size:10.7px;color:#444">27.10.2022</div>
<div class="t" style="left:1069px;top:498.5px;width:122px;text-align:right;font-size:10.7px;color:#555">11</div>
<div class="t" style="left:1195px;top:498.5px;width:162px;text-align:right;font-size:10.7px;color:#555">1200.00</div>
<div class="t" style="left:1361px;top:498.5px;width:86px;text-align:right;font-size:10.7px;color:#555">13200.00</div>
<div class="a" style="left:214.3px;top:527px;width:18.5px;height:18.6px;border:1px solid #ebebeb;border-radius:2px;background:#fff"></div>
<div class="a" style="left:218.6px;top:530.3px;line-height:0"><svg width="9.5" height="11" viewBox="0 0 9.5 11"><path d="M3.3 1.9V0.9H6.2V1.9" fill="none" stroke="#5f5360" stroke-width="1"/><rect x="0" y="1.6" width="9.5" height="1.3" fill="#5f5360"/><path d="M1.2 2.9L1.6 10.1H7.9L8.3 2.9" fill="#ead9ea" stroke="#5f5360" stroke-width="1.1"/><path d="M3.6 4.4V8.6M5.9 4.4V8.6" stroke="#5f5360" stroke-width="1.1"/></svg></div>
<div class="a" style="left:236.3px;top:527px;width:20.7px;height:18.6px;border:1px solid #ebebeb;border-radius:2px;background:#fff"></div>
<div class="a" style="left:240.6px;top:530.4px;line-height:0"><svg width="12.5" height="10" viewBox="0 0 12.5 10"><path d="M6.8 1H2C1.3 1 0.8 1.5 0.8 2.2V8.3C0.8 9 1.3 9.4 2 9.4H7.9C8.6 9.4 9 9 9 8.3V6" fill="none" stroke="#484848" stroke-width="1.3"/><path d="M4.1 7.2L4.6 5.3 10.3 0 12 1.6 6.2 7Z" fill="#484848"/></svg></div>
<div class="a" style="left:260.3px;top:527px;width:14px;height:18.6px;border:1px solid #ebebeb;border-radius:2px;background:#fff"></div>
<div class="a" style="left:264.3px;top:530.5px;line-height:0"><svg width="6" height="10" viewBox="0 0 6 10"><circle cx="3" cy="1.2" r="1.15" fill="#1e1e1e"/><path d="M0.6 3.4H4.1V8.2H5.2V9.6H0.5V8.2H1.6V4.8H0.6Z" fill="#1e1e1e"/></svg></div>
<div class="t" style="left:285.5px;top:530px;font-size:10.3px;color:#707070;-webkit-text-stroke-width:0.1px">8</div>
<div class="a" style="left:464px;top:527.6px;width:133px;height:18px;background:#c0ddd6;border-radius:3px"></div>
<div class="t" style="left:469px;top:530.8px;font-size:10.7px;color:#3a4650">Свободна</div>
<div class="t" style="left:607px;top:528.5px;font-size:10.7px;color:#767d86">База отдыха Ласточка</div>
<div class="t" style="left:802.7px;top:528.5px;font-size:10.7px;color:#6f7882">2х местный номер</div>
<div class="t" style="left:952px;top:528.5px;font-size:10.7px;color:#444">27.10.2022</div>
<div class="t" style="left:1069px;top:528.5px;width:122px;text-align:right;font-size:10.7px;color:#555">11</div>
<div class="t" style="left:1195px;top:528.5px;width:162px;text-align:right;font-size:10.7px;color:#555">1200.00</div>
<div class="t" style="left:1361px;top:528.5px;width:86px;text-align:right;font-size:10.7px;color:#555">13200.00</div>
<div class="a" style="left:214.3px;top:557px;width:18.5px;height:18.6px;border:1px solid #ebebeb;border-radius:2px;background:#fff"></div>
<div class="a" style="left:218.6px;top:560.3px;line-height:0"><svg width="9.5" height="11" viewBox="0 0 9.5 11"><path d="M3.3 1.9V0.9H6.2V1.9" fill="none" stroke="#5f5360" stroke-width="1"/><rect x="0" y="1.6" width="9.5" height="1.3" fill="#5f5360"/><path d="M1.2 2.9L1.6 10.1H7.9L8.3 2.9" fill="#ead9ea" stroke="#5f5360" stroke-width="1.1"/><path d="M3.6 4.4V8.6M5.9 4.4V8.6" stroke="#5f5360" stroke-width="1.1"/></svg></div>
<div class="a" style="left:236.3px;top:557px;width:20.7px;height:18.6px;border:1px solid #ebebeb;border-radius:2px;background:#fff"></div>
<div class="a" style="left:240.6px;top:560.4px;line-height:0"><svg width="12.5" height="10" viewBox="0 0 12.5 10"><path d="M6.8 1H2C1.3 1 0.8 1.5 0.8 2.2V8.3C0.8 9 1.3 9.4 2 9.4H7.9C8.6 9.4 9 9 9 8.3V6" fill="none" stroke="#484848" stroke-width="1.3"/><path d="M4.1 7.2L4.6 5.3 10.3 0 12 1.6 6.2 7Z" fill="#484848"/></svg></div>
<div class="a" style="left:260.3px;top:557px;width:14px;height:18.6px;border:1px solid #ebebeb;border-radius:2px;background:#fff"></div>
<div class="a" style="left:264.3px;top:560.5px;line-height:0"><svg width="6" height="10" viewBox="0 0 6 10"><circle cx="3" cy="1.2" r="1.15" fill="#1e1e1e"/><path d="M0.6 3.4H4.1V8.2H5.2V9.6H0.5V8.2H1.6V4.8H0.6Z" fill="#1e1e1e"/></svg></div>
<div class="t" style="left:285.5px;top:560px;font-size:10.3px;color:#707070;-webkit-text-stroke-width:0.1px">9</div>
<div class="a" style="left:464px;top:557.6px;width:133px;height:18px;background:#c0ddd6;border-radius:3px"></div>
<div class="t" style="left:469px;top:560.8px;font-size:10.7px;color:#3a4650">Свободна</div>
<div class="t" style="left:607px;top:558.5px;font-size:10.7px;color:#767d86">База отдыха Ласточка</div>
<div class="t" style="left:802.7px;top:558.5px;font-size:10.7px;color:#6f7882">2х местный номер</div>
<div class="t" style="left:952px;top:558.5px;font-size:10.7px;color:#444">27.10.2022</div>
<div class="t" style="left:1069px;top:558.5px;width:122px;text-align:right;font-size:10.7px;color:#555">11</div>
<div class="t" style="left:1195px;top:558.5px;width:162px;text-align:right;font-size:10.7px;color:#555">1200.00</div>
<div class="t" style="left:1361px;top:558.5px;width:86px;text-align:right;font-size:10.7px;color:#555">13200.00</div>
<div class="t" style="left:1361px;top:587.5px;width:86px;text-align:right;font-size:10.7px;font-weight:bold;color:#444">170300.00</div>
<div class="t" style="left:209px;top:617px;font-size:10.7px;color:#555">Отображено <b style="color:#444">1 - 9</b> (всего <b style="color:#444">9</b>)</div>
</body></html>
